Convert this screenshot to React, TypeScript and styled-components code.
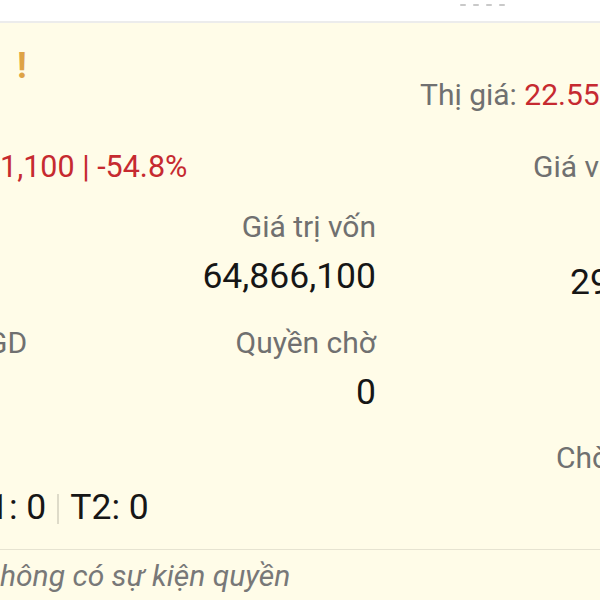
import React from 'react';
import styled, { createGlobalStyle } from 'styled-components';

const GlobalStyle = createGlobalStyle`
  html, body {
    margin: 0;
    padding: 0;
    background: #fffce8;
    overflow: hidden;
  }
  body {
    font-family: Roboto, 'Noto Sans', Arial, sans-serif;
    width: 600px;
    height: 600px;
  }
`;

const TopBar = styled.div`
  background: #ffffff;
  border-bottom: 2px solid #ececec;
  display: flex;
  gap: 7px;
  padding: 4px 0 0 460px;
  height: 17px;
`;

const Dash = styled.span`
  width: 6px;
  height: 2px;
  background: #c9c9c9;
  border-radius: 1px;
`;

const Card = styled.div`
  display: flex;
  flex-direction: column;
  width: 600px;
`;

const Row = styled.div<{ $top?: number }>`
  display: grid;
  grid-template-columns: 200px 176px 224px;
  align-items: start;
  margin-top: ${(p) => p.$top ?? 0}px;
`;

const Cell = styled.div<{ $col: number; $indent?: number; $drop?: number }>`
  grid-column: ${(p) => p.$col};
  display: flex;
  flex-direction: column;
  align-items: ${(p) => (p.$col === 2 ? 'flex-end' : 'flex-start')};
  padding-left: ${(p) => p.$indent ?? 0}px;
  padding-top: ${(p) => p.$drop ?? 0}px;
  white-space: nowrap;
`;

const Warn = styled.span`
  font-size: 36px;
  font-weight: 700;
  line-height: 46px;
  color: #dea346;
  margin-left: 17px;
`;

const Label = styled.span<{ $clip?: number }>`
  font-size: 30px;
  line-height: 40px;
  color: #707070;
  margin-left: ${(p) => -(p.$clip ?? 0)}px;
`;

const Value = styled.span<{ $clip?: number }>`
  font-size: 35.5px;
  line-height: 46px;
  margin-top: 6px;
  margin-left: ${(p) => -(p.$clip ?? 0)}px;
  color: #161616;
  display: flex;
  align-items: center;
`;

const Red = styled.span`
  color: #c62a30;
`;

const Change = styled.span`
  font-size: 30.5px;
  line-height: 40px;
  color: #c62a30;
`;

const Divider = styled.span`
  display: inline-block;
  width: 2px;
  height: 30px;
  background: #dedbc9;
  margin: 4px 11px 0 11px;
`;

const Separator = styled.div`
  height: 1px;
  background: #e6e3d1;
  margin-top: 19px;
`;

const Empty = styled.div`
  font-size: 30px;
  line-height: 38px;
  font-style: italic;
  color: #787878;
  margin-top: 7px;
  white-space: nowrap;
`;

const StatsGrid = styled.div`
  display: grid;
  grid-template-columns: 200px 176px 224px;
  row-gap: 18px;
  margin-top: 20px;
`;

export default function App() {
  return (
    <>
      <GlobalStyle />
      <TopBar>
        <Dash />
        <Dash />
        <Dash />
        <Dash />
      </TopBar>
      <Card>
        <Row $top={20}>
          <Cell $col={1}>
            <Warn>!</Warn>
          </Cell>
          <Cell $col={3} $indent={44} $drop={32}>
            <Label>
              Thị giá: <Red>22.55</Red>
            </Label>
          </Cell>
        </Row>
        <Row $top={32}>
          <Cell $col={1}>
            <Change>1,100 | -54.8%</Change>
          </Cell>
          <Cell $col={3} $indent={157}>
            <Label>Giá v</Label>
          </Cell>
        </Row>
        <StatsGrid>
          <Cell $col={1} />
          <Cell $col={2}>
            <Label>Giá trị vốn</Label>
            <Value>64,866,100</Value>
          </Cell>
          <Cell $col={3} $indent={194} $drop={46}>
            <Value>29</Value>
          </Cell>

          <Cell $col={1}>
            <Label $clip={13}>GD</Label>
          </Cell>
          <Cell $col={2}>
            <Label>Quyền chờ</Label>
            <Value>0</Value>
          </Cell>
          <Cell $col={3} />

          <Cell $col={1} $drop={45}>
            <Value $clip={11}>
              1: 0<Divider />T2: 0
            </Value>
          </Cell>
          <Cell $col={2} />
          <Cell $col={3} $indent={180} $drop={5}>
            <Label>Chờ</Label>
          </Cell>
        </StatsGrid>
        <Separator />
        <Empty>hông có sự kiện quyền</Empty>
      </Card>
    </>
  );
}
